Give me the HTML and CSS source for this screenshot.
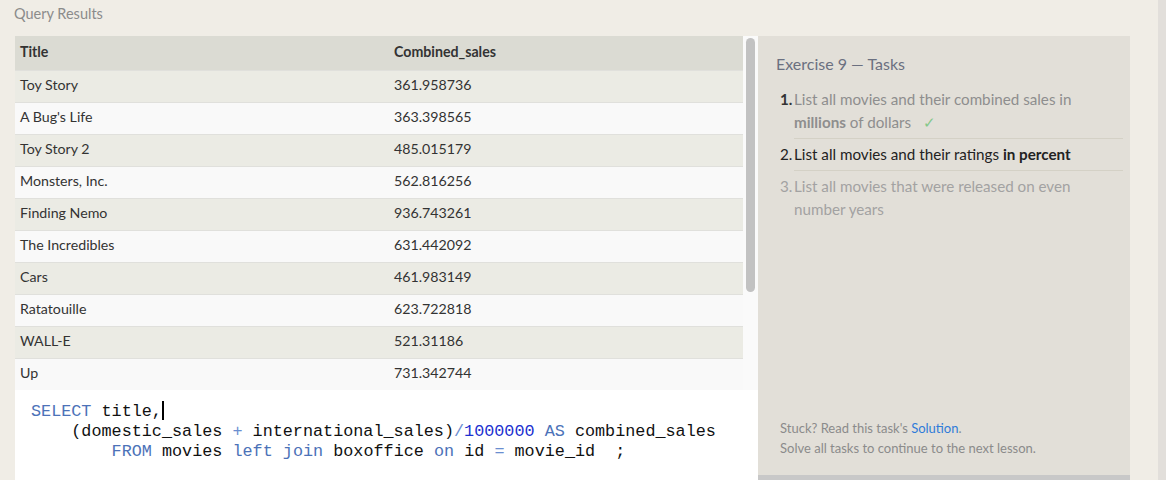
FILE: index.html
```html
<!DOCTYPE html>
<html>
<head>
<meta charset="utf-8">
<link rel="stylesheet" href="styles.css">
</head>
<body>
<div class="page">
  <div class="content">
    <div class="results-label">Query Results</div>
    <div class="main">
      <div class="left">
        <div class="table-wrap">
          <table class="results">
            <thead>
              <tr><th class="c1">Title</th><th>Combined_sales</th></tr>
            </thead>
            <tbody>
              <tr><td>Toy Story</td><td>361.958736</td></tr>
              <tr><td>A Bug's Life</td><td>363.398565</td></tr>
              <tr><td>Toy Story 2</td><td>485.015179</td></tr>
              <tr><td>Monsters, Inc.</td><td>562.816256</td></tr>
              <tr><td>Finding Nemo</td><td>936.743261</td></tr>
              <tr><td>The Incredibles</td><td>631.442092</td></tr>
              <tr><td>Cars</td><td>461.983149</td></tr>
              <tr><td>Ratatouille</td><td>623.722818</td></tr>
              <tr><td>WALL-E</td><td>521.31186</td></tr>
              <tr><td>Up</td><td>731.342744</td></tr>
            </tbody>
          </table>
          <div class="vscroll"><div class="thumb"></div></div>
        </div>
        <div class="editor">
          <div class="code-line"><span class="kw">SELECT</span> title,<span class="cursor"></span></div>
          <div class="code-line indent1">(domestic_sales <span class="op">+</span> international_sales)<span class="op">/</span><span class="num">1000000</span> <span class="kw">AS</span> combined_sales</div>
          <div class="code-line indent2"><span class="kw">FROM</span> movies <span class="kw">left</span> <span class="kw">join</span> boxoffice <span class="kw">on</span> id <span class="op">=</span> movie_id  ;</div>
        </div>
      </div>
      <div class="right">
        <div class="panel">
          <h2 class="panel-title">Exercise 9 — Tasks</h2>
          <div class="tasks">
            <div class="task done">
              <span class="tnum">1.</span>
              <span class="ttext">List all movies and their combined sales in <b>millions</b> of dollars <span class="check">✓</span></span>
            </div>
            <div class="task current">
              <span class="tnum">2.</span>
              <span class="ttext">List all movies and their ratings <b>in percent</b></span>
            </div>
            <div class="task todo">
              <span class="tnum">3.</span>
              <span class="ttext last">List all movies that were released on even number years</span>
            </div>
          </div>
          <div class="panel-foot">
            <div>Stuck? Read this task's <a class="link">Solution</a>.</div>
            <div>Solve all tasks to continue to the next lesson.</div>
          </div>
        </div>
        <div class="panel-bar"></div>
      </div>
    </div>
  </div>
  <div class="page-scroll"></div>
</div>
</body>
</html>
```
FILE: styles.css
```css
* { box-sizing: border-box; }
html, body { margin: 0; padding: 0; }
body {
  background: #f0ede6;
  font-family: "Lato", "Open Sans", sans-serif;
  color: #333;
  width: 1166px;
  height: 480px;
  overflow: hidden;
}
.page {
  display: flex;
  height: 480px;
}
.content {
  flex: 1;
  display: flex;
  flex-direction: column;
}
.results-label {
  height: 36px;
  padding: 5px 0 0 14px;
  font-size: 14.5px;
  line-height: 18px;
  color: #8b8b8b;
}
.main {
  display: flex;
  padding-left: 15px;
  flex: 1;
  min-height: 0;
}
.left {
  width: 743px;
  display: flex;
  flex-direction: column;
}
.table-wrap {
  display: flex;
  height: 354px;
}
.results {
  width: 728px;
  border-collapse: collapse;
  font-size: 14.2px;
  color: #333;
  align-self: flex-start;
}
.results th {
  background: #dbdbd3;
  text-align: left;
  font-weight: bold;
  height: 34px;
  padding: 0 5px 3px 5px;
}
.results th.c1 { width: 374px; }
.results td {
  height: 32px;
  padding: 0 5px 3px 5px;
  border-top: 1px solid #e0e0dc;
}
.results tbody tr:nth-child(odd) td { background: #ebebe4; }
.results tbody tr:nth-child(even) td { background: #f9f9f9; }
.vscroll {
  width: 15px;
  background: #fafafa;
  padding: 2px 3px 0 3px;
}
.thumb {
  height: 254px;
  background: #c2c2c2;
  border-radius: 5px;
}
.editor {
  flex: 1;
  background: #ffffff;
  padding: 11px 0 0 16px;
}
.code-line {
  white-space: pre;
  font-family: "Liberation Mono", monospace;
  font-size: 16.8px;
  line-height: 20px;
  color: #111;
}
.indent1 { padding-left: 40.3px; }
.indent2 { padding-left: 80.6px; }
.kw { color: #4c72b8; }
.op { color: #6a8ed0; }
.num { color: #1c31d0; }
.cursor {
  display: inline-block;
  width: 2px;
  height: 19px;
  background: #000;
  vertical-align: -4px;
}
.right {
  width: 372px;
  display: flex;
  flex-direction: column;
}
.panel {
  flex: 1;
  background: #e2dfd8;
  display: flex;
  flex-direction: column;
  padding: 18px 7px 17px 18px;
}
.panel-title {
  margin: 0 0 14px 0;
  font-size: 16px;
  font-weight: normal;
  line-height: 20px;
  color: #6b7080;
}
.task {
  display: flex;
  font-size: 15.2px;
  line-height: 23px;
  padding-left: 4px;
}
.tnum {
  width: 14px;
  flex: none;
  padding: 4px 0;
}
.ttext {
  flex: 1;
  padding: 4px 0;
  border-bottom: 1px solid #d4d1c6;
}
.task:first-child .ttext,
.task:first-child .tnum { padding-top: 0; }
.ttext.last { border-bottom: none; }
.done .tnum { color: #333; font-weight: bold; }
.done .ttext { color: #8e8e8e; }
.current .tnum, .current .ttext { color: #222; }
.current b { color: #222; }
.todo .tnum, .todo .ttext { color: #a2a2a2; }
.check {
  color: #84c88a;
  margin-left: 8px;
}
.panel-foot {
  margin-top: auto;
  font-size: 13px;
  line-height: 20px;
  color: #8b8b8b;
  padding-left: 4px;
}
.link { color: #2f7bd9; }
.panel-bar {
  height: 5px;
  background: #c8c8c8;
}
.page-scroll {
  width: 8px;
  margin-left: 28px;
  background: #e2dfdb;
}
```
